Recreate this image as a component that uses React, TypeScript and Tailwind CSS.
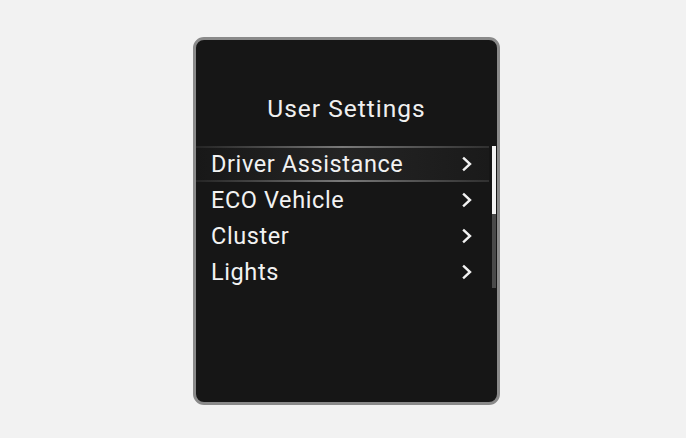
import React from "react";

const items = ["Driver Assistance", "ECO Vehicle", "Cluster", "Lights"];

function Chevron() {
  return (
    <svg width="12" height="16" viewBox="0 0 12 16" fill="none">
      <path d="M3 2.5 L9 8 L3 13.5" stroke="#f2f2f2" strokeWidth="2.4" strokeLinecap="square" strokeLinejoin="miter" />
    </svg>
  );
}

export default function App() {
  return (
    <div className="w-[686px] h-[438px] bg-[#f2f2f2] pt-[37px] pl-[193px]" style={{ fontFamily: "Roboto, 'Noto Sans', sans-serif" }}>
      <div className="w-[307px] h-[368px] rounded-[11px] border-[3px] border-[#8a8a8a] bg-[#161616] flex flex-col">
        <div className="pt-[53px] h-[32px] box-content text-center text-[24.5px] leading-[32px] text-[#f0f0f0] tracking-[1px]">
          User Settings
        </div>
        <div className="mt-[21px] flex">
          <div className="flex-1 flex flex-col">
            {items.map((t, i) => (
              <div
                key={t}
                className={
                  "relative h-[36px] flex items-center justify-between pl-[15px] pr-[16px] " +
                  (i === 0 ? "bg-gradient-to-r from-[#181818] via-[#242424] to-[#1a1a1a]" : "")
                }
              >
                {i === 0 && (
                  <>
                    <div className="absolute left-0 right-0 top-0 h-[2px] bg-gradient-to-r from-[#252525] via-[#7a7a7a] to-[#303030]" />
                    <div className="absolute left-0 right-0 bottom-0 h-[2px] bg-gradient-to-r from-[#252525] via-[#7a7a7a] to-[#303030]" />
                  </>
                )}
                <span className="text-[23.5px] leading-[28px] text-[#f2f2f2] tracking-[0.6px]">{t}</span>
                <Chevron />
              </div>
            ))}
          </div>
          <div className="w-[4px] ml-[3px] mr-[1px] h-[142px] bg-[#4a4a4a] flex flex-col">
            <div className="h-[68px] bg-[#f4f4f4]" />
          </div>
        </div>
      </div>
    </div>
  );
}
